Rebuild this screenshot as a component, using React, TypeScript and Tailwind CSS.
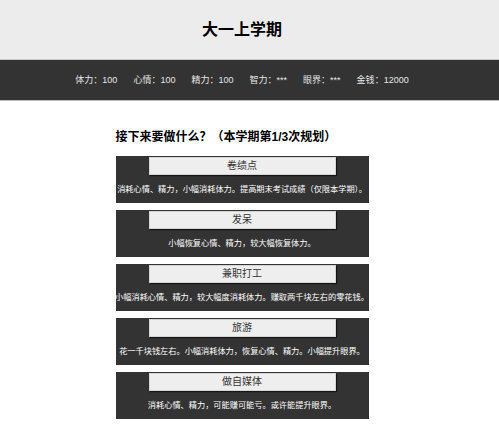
import React from "react";

const font = { fontFamily: '"Liberation Sans", "Noto Sans CJK SC", sans-serif' };

const stats = [
  ["体力", "100"],
  ["心情", "100"],
  ["精力", "100"],
  ["智力", "***"],
  ["眼界", "***"],
  ["金钱", "12000"],
];

const options = [
  ["卷绩点", "消耗心情、精力，小幅消耗体力。提高期末考试成绩（仅限本学期）。"],
  ["发呆", "小幅恢复心情、精力，较大幅恢复体力。"],
  ["兼职打工", "小幅消耗心情、精力，较大幅度消耗体力。赚取两千块左右的零花钱。"],
  ["旅游", "花一千块钱左右。小幅消耗体力，恢复心情、精力。小幅提升眼界。"],
  ["做自媒体", "消耗心情、精力，可能赚可能亏。或许能提升眼界。"],
];

export default function App() {
  return (
    <div className="w-[499px] h-[442px] bg-white overflow-hidden" style={font}>
      <div className="h-[59px] bg-[#ececec] flex items-center justify-center pr-[15px]">
        <h1 className="text-[16px] font-bold text-black leading-none">大一上学期</h1>
      </div>
      <div className="h-[1px] bg-[#c8c8c8]" />
      <div className="h-[41px] bg-[#333333] flex items-center justify-center gap-[16px] pr-[15px] border-b border-[#bdbdbd]">
        {stats.map(([k, v]) => (
          <span key={k} className="text-[9px] text-[#e6e6e6] leading-none whitespace-nowrap">
            {k}：{v}
          </span>
        ))}
      </div>
      <div className="flex justify-center pr-[15px]">
        <div className="w-[253px] pt-[30px] flex flex-col">
          <h2 className="text-[12px] font-bold text-black leading-none mb-[13px] whitespace-nowrap">
            接下来要做什么？（本学期第1/3次规划）
          </h2>
          <div className="flex flex-col gap-[7px]">
            {options.map(([t, d]) => (
              <div key={t} className="h-[47px] bg-[#333333] flex flex-col items-center pt-[1px]">
                <button className="w-[187px] h-[18px] bg-[#eeeeee] border border-[#d4d4d4] shadow-[1px_1px_1px_rgba(0,0,0,0.6)] text-[10px] text-[#333] leading-none flex items-center justify-center">
                  {t}
                </button>
                <div className="flex-1 flex items-center justify-center pt-[2px]">
                  <p className="text-[8.2px] text-white leading-none whitespace-nowrap">{d}</p>
                </div>
              </div>
            ))}
          </div>
        </div>
      </div>
    </div>
  );
}
